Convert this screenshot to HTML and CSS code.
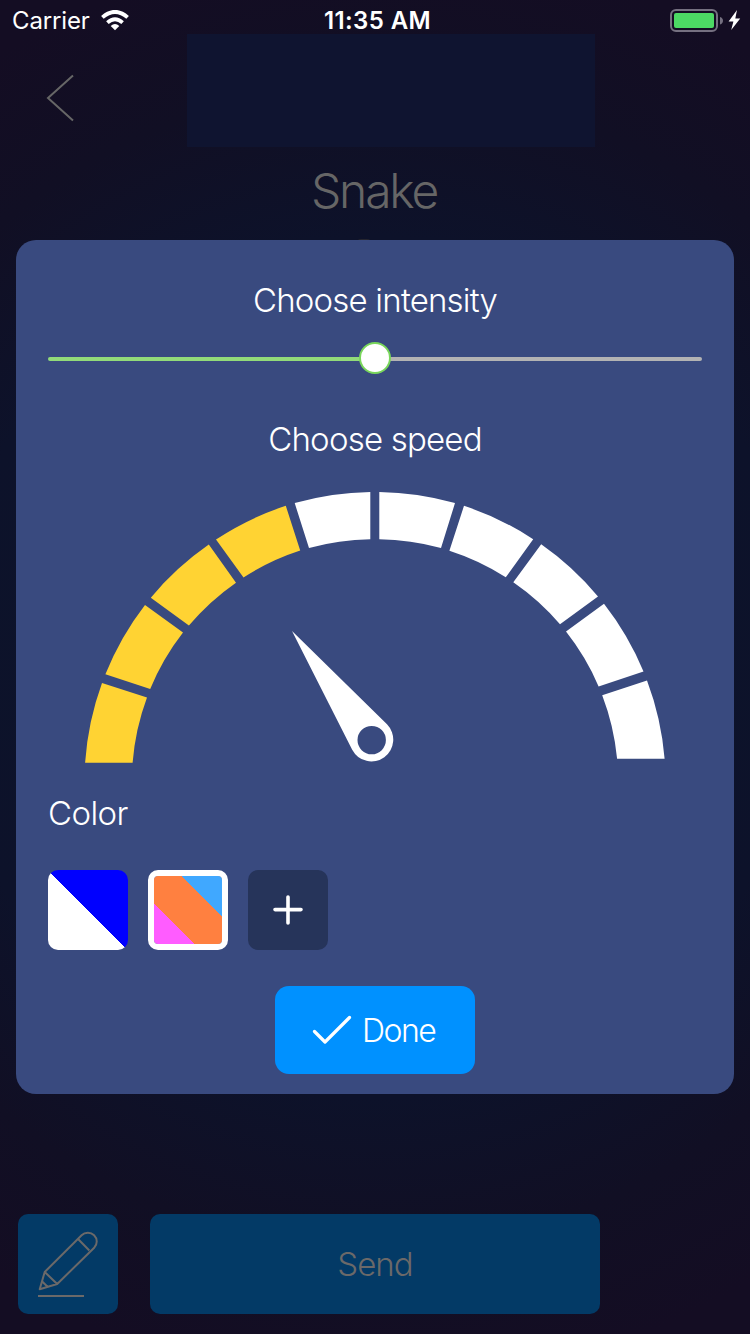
FILE: index.html
```html
<!DOCTYPE html>
<html lang="en">
<head>
<meta charset="utf-8">
<title>Snake</title>
<link rel="stylesheet" href="styles.css">
</head>
<body>
<div class="screen">
  <header class="status">
    <div class="status-left">
      <span class="carrier">Carrier</span>
      <svg class="wifi" width="28" height="21" viewBox="0 0 28 21">
        <path d="M1.4 7.4Q14-3.6 26.6 7.4" fill="none" stroke="#fff" stroke-width="3.9"/>
        <path d="M6.4 12.6Q14 5.8 21.6 12.6" fill="none" stroke="#fff" stroke-width="3.8"/>
        <path d="M14 20.2 9.7 16Q14 12.1 18.3 16Z" fill="#fff"/>
      </svg>
    </div>
    <span class="clock">11:35 AM</span>
    <svg class="battery" width="72" height="24" viewBox="0 0 72 24">
      <rect x="1" y="1" width="46" height="21" rx="5" fill="none" stroke="#757080" stroke-width="2"/>
      <rect x="4" y="4" width="40" height="15" rx="2" fill="#4cd964"/>
      <path d="M50 8Q53 9 53 11.7T50 15.6Z" fill="#757080"/>
      <path d="M67 1 58.6 12.5H63.4L61.2 21 70.2 9.5H65.3Z" fill="#fff"/>
    </svg>
  </header>
  <nav class="topbar">
    <svg class="back" width="30" height="50" viewBox="0 0 30 50"><path d="M28 2.5 3 25 28 47.5" fill="none" stroke="#666" stroke-width="2"/></svg>
    <div class="banner"></div>
  </nav>
  <h1 class="title">Snake</h1>
  <div class="knob"></div>
  <footer class="actions">
    <button class="edit" aria-label="Edit">
      <svg width="100" height="100" viewBox="0 0 100 100" fill="none" stroke="#6b6969" stroke-width="2" stroke-linejoin="round">
        <path d="M26.7 58 63.6 21.3A8.8 8.8 0 0 1 76.2 33.7L39.2 70 21.7 75.3Z M60.3 25.3 71.3 36.5 M26.7 58 39.2 70 M24.2 67.5 29.8 73"/>
        <path d="M20 82H66"/>
      </svg>
    </button>
    <button class="send"><span>Send</span></button>
  </footer>
  <section class="dialog">
    <h2 class="heading intensity">Choose intensity</h2>
    <div class="slider"><div class="thumb"></div></div>
    <h2 class="heading speed">Choose speed</h2>
    <svg class="gauge" width="590" height="280" viewBox="80 488 590 280">
      <g fill="#ffd333">
        <path d="M85.1 762.8A290.4 290.4 0 0 1 102 683L147 697.5A243.2 243.2 0 0 0 132.6 762.8Z"/>
        <path d="M105.4 674.3A290.4 290.4 0 0 1 145 605L183 632.6A243.2 243.2 0 0 0 150.2 689Z"/>
        <path d="M150.8 597.7A290.4 290.4 0 0 1 208.8 544.6L236 582.7A243.2 243.2 0 0 0 188.9 625.6Z"/>
        <path d="M216 539.5A290.4 290.4 0 0 1 285.8 505.8L300.2 550.6A243.2 243.2 0 0 0 243.5 577.5Z"/>
      </g>
      <g fill="#fff">
        <path d="M294.7 503.1A290.4 290.4 0 0 1 370.3 492V539.2A243.2 243.2 0 0 0 309 548Z"/>
        <path d="M379.3 492A290.4 290.4 0 0 1 455 503.1L441 548A243.2 243.2 0 0 0 379.3 539.2Z"/>
        <path d="M464 505.8A290.4 290.4 0 0 1 533.2 539.2L505.8 577.2A243.2 243.2 0 0 0 449.4 550.7Z"/>
        <path d="M541.2 544.2A290.4 290.4 0 0 1 598 596.4L560 624.3A243.2 243.2 0 0 0 513.3 582.3Z"/>
        <path d="M604 603.8A290.4 290.4 0 0 1 643.5 671.6L598.6 686.4A243.2 243.2 0 0 0 566 631.6Z"/>
        <path d="M647 680.6A290.4 290.4 0 0 1 664.6 758.8H617.1A243.2 243.2 0 0 0 602.2 695.3Z"/>
        <path fill-rule="evenodd" d="M292 631 387 724.3A21.8 21.8 0 1 1 352.2 749.8ZM371.7 725.9A14.2 14.2 0 1 0 371.7 754.3A14.2 14.2 0 1 0 371.7 725.9Z"/>
      </g>
    </svg>
    <h2 class="heading color">Color</h2>
    <div class="swatches">
      <div class="swatch duo"></div>
      <div class="swatch trio"></div>
      <button class="swatch add" aria-label="Add color">
        <svg width="30" height="30" viewBox="0 0 30 30"><path d="M15 2V28M2 14.6H28" stroke="#fff" stroke-width="3.6" stroke-linecap="round"/></svg>
      </button>
    </div>
    <button class="done">
      <svg width="40" height="30" viewBox="0 0 40 30"><path d="M2.5 16.5 13 27 37.5 2.5" fill="none" stroke="#fff" stroke-width="3.2" stroke-linecap="round" stroke-linejoin="round"/></svg>
      <span>Done</span>
    </button>
  </section>
</div>
</body>
</html>
```
FILE: styles.css
```css
* { box-sizing: border-box; }
body { margin: 0; font-family: Inter, "Liberation Sans", sans-serif; }
h1, h2 { margin: 0; font-weight: 350; }
button { border: 0; padding: 0; font: inherit; color: inherit; }
svg { display: block; flex: none; }

.screen {
  position: relative;
  width: 750px;
  height: 1334px;
  overflow: hidden;
  display: flex;
  flex-direction: column;
  background: radial-gradient(circle at 375px 667px, #0b152a 0, #0d122a 430px, #110f24 580px, #140d23 720px);
}

.status {
  height: 34px;
  flex: none;
  display: grid;
  grid-template-columns: 1fr auto 1fr;
  padding: 0 8px 0 12px;
  color: #fff;
  font-size: 24px;
  line-height: 29px;
}
.status-left { display: flex; padding-top: 6px; }
.carrier { width: 77px; font-weight: 400; letter-spacing: -0.15px; white-space: nowrap; }
.wifi { margin: 4px 0 0 12px; }
.clock { padding: 6px 0 0 1px; font-weight: 600; letter-spacing: 0.4px; }
.battery { justify-self: end; margin-top: 9px; }

.topbar { height: 114px; flex: none; display: flex; }
.back { margin: 39px 0 0 45px; }
.banner { width: 408px; height: 113px; margin-left: 112px; background: #0f1430; }

.title {
  height: 91px;
  flex: none;
  padding-top: 14px;
  text-align: center;
  font-size: 48px;
  line-height: 58px;
  font-weight: 275;
  letter-spacing: -2.2px;
  text-indent: -2px;
  color: #666;
}
.knob { flex: none; width: 14px; height: 4px; margin-left: 357px; border-radius: 7px 7px 0 0; background: #25252f; }

.actions { margin-top: auto; padding: 0 0 20px 18px; display: flex; gap: 32px; color: #6b6969; }
.edit, .send { height: 100px; border-radius: 10px; background: #033a66; }
.edit { width: 100px; }
.send { width: 450px; font-size: 33px; font-weight: 350; letter-spacing: -1px; }

.dialog {
  position: absolute;
  left: 16px;
  top: 240px;
  width: 718px;
  height: 854px;
  border-radius: 20px;
  background: #394a7f;
  color: #fff;
  padding: 40px 32px 20px;
  display: flex;
  flex-direction: column;
}
.heading { font-size: 33px; line-height: 40px; letter-spacing: -0.8px; flex: none; white-space: nowrap; }
.intensity, .speed { text-align: center; }
.slider {
  height: 4px;
  flex: none;
  margin: 37px 0 58px;
  border-radius: 2px;
  background: linear-gradient(90deg, #92db79 50%, #b3b3b3 50%);
  display: flex;
  align-items: center;
  justify-content: center;
}
.thumb { width: 32px; height: 32px; flex: none; margin-top: -2px; border: 2px solid #79d65b; border-radius: 50%; background: #fff; }
.gauge { margin: 29px 0 0 32px; }
.color { margin-top: 25px; letter-spacing: -0.6px; }
.swatches { display: flex; gap: 20px; margin-top: 37px; }
.swatch { width: 80px; height: 80px; border-radius: 10px; }
.duo { background: linear-gradient(45deg, #fff 50%, #00f 50%); }
.trio { border: 6px solid #fff; background: linear-gradient(45deg, #ff5cff 30%, #ff8040 30%, #ff8040 70%, #40a8ff 70%) padding-box; }
.add { background: #26345a; display: flex; align-items: center; justify-content: center; }
.done {
  width: 200px;
  height: 88px;
  margin: 36px auto 0;
  border-radius: 14px;
  background: #0091ff;
  display: flex;
  align-items: center;
  padding-left: 37px;
  gap: 10px;
  font-size: 32px;
  font-weight: 350;
  letter-spacing: -1.5px;
}
```
